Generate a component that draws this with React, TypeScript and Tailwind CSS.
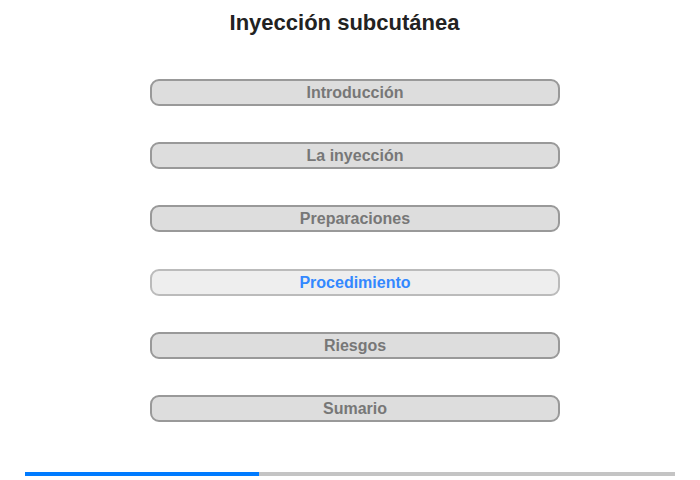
const sections = [
  { label: "Introducción" },
  { label: "La inyección" },
  { label: "Preparaciones" },
  { label: "Procedimiento", active: true },
  { label: "Riesgos" },
  { label: "Sumario" },
];

export default function App() {
  return (
    <div className="relative h-[480px] w-[700px] bg-white font-['Liberation_Sans',Arial,sans-serif]">
      <h1 className="pt-[9px] pr-[11px] text-center text-[22px] leading-[28px] font-bold text-[#222]">
        Inyección subcutánea
      </h1>
      <div className="ml-[150px] mt-[42px] flex w-[410px] flex-col gap-[36.2px]">
        {sections.map((s) => (
          <button
            key={s.label}
            type="button"
            className={
              s.active
                ? "h-[27px] rounded-[9px] border-2 border-[#bbb] bg-[#eee] text-[16px] leading-[23px] font-bold text-[#3388ff]"
                : "h-[27px] rounded-[9px] border-2 border-[#999] bg-[#ddd] text-[16px] leading-[23px] font-bold text-[#777]"
            }
          >
            {s.label}
          </button>
        ))}
      </div>
      <div className="absolute left-[25px] top-[472px] flex h-[4px] w-[650px] bg-[#c4c4c4]">
        <div className="h-full w-[234px] bg-[#007bff]" />
      </div>
    </div>
  );
}
